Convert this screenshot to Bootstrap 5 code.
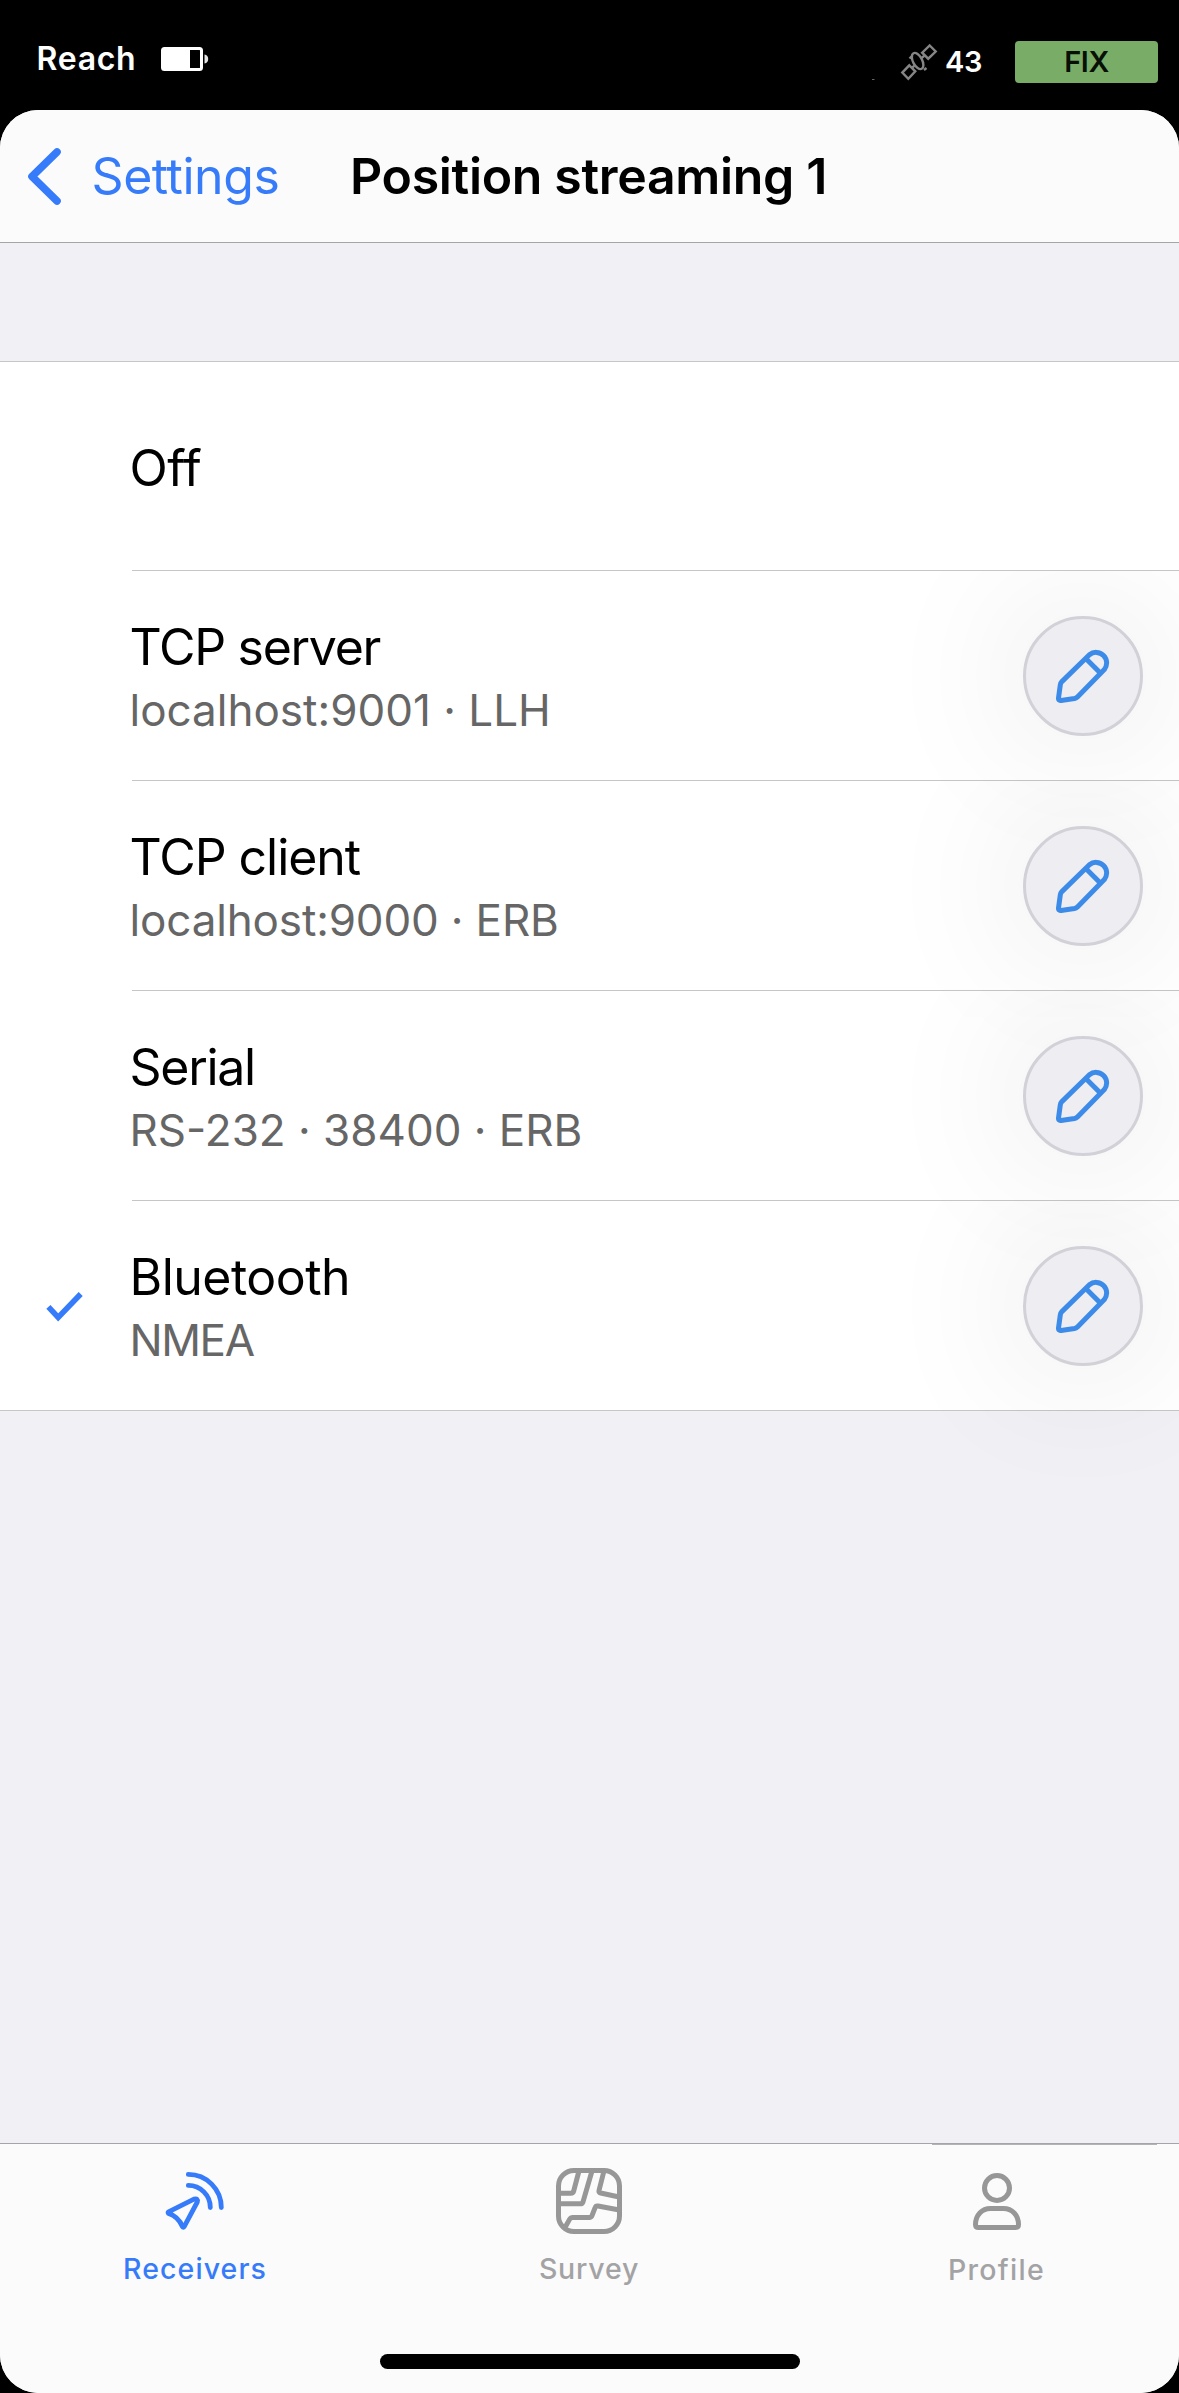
<!DOCTYPE html>
<html lang="en">
<head>
<meta charset="utf-8">
<meta name="viewport" content="width=device-width, initial-scale=1">
<title>Position streaming 1</title>
<link href="https://cdn.jsdelivr.net/npm/bootstrap@5.3.0/dist/css/bootstrap.min.css" rel="stylesheet">
<style>
  :root { --ios-blue: #367bf9; --ios-gray: #979797; }
  body { background: #000; color: #000; font-family: Inter, Roboto, "Liberation Sans", sans-serif; height: 2393px; overflow: hidden; }
  svg { display: block; flex: none; overflow: visible; }
  .status-bar { height: 110px; color: #fff; padding: 0 21px 0 36.5px; }
  .device-name { font-size: 32px; font-weight: 600; letter-spacing: .72px; line-height: 36px; width: 124.5px; margin-top: 40.5px; }
  .battery { margin-top: 47px; }
  .sat-icon { margin: 44px 8px 0 0; }
  .sat-count { font-size: 29px; font-weight: 600; letter-spacing: -.2px; line-height: 42px; width: 70px; margin-top: 40.5px; }
  .fix-state { width: 143px; height: 42px; margin-top: 41px; border-radius: 4px; background: #79ad67; color: #081005; font-size: 29px; font-weight: 600; letter-spacing: -.4px; line-height: 41px; }
  .sheet { height: 2283px; background: #f1f0f5; border-radius: 38px; overflow: hidden; }
  .nav-top { height: 133px; background: #fbfbfb; border-bottom: 1px solid #a5a5a7; }
  .nav-back { width: 350px; padding-left: 28px; color: var(--ios-blue); font-size: 50px; letter-spacing: -.45px; line-height: 60px; }
  .nav-back-text { padding-left: 30.5px; }
  .nav-name { font-size: 50px; font-weight: 600; letter-spacing: -.33px; line-height: 60px; margin: 0; }
  .options { margin-top: 118px; background: #fff; border-top: 1px solid #c6c6ca; border-bottom: 1px solid #c6c6c8; }
  .option { height: 210px; clip-path: inset(0 0 -200px 0); }
  .option:first-child, .option:last-child { height: 209px; }
  .option-check { width: 132px; padding: 91px 0 0 46px; flex: none; }
  .option-main { border-bottom: 1px solid #c6c6c8; }
  .option:last-child .option-main { border-bottom: 0; }
  .option-text { margin: 44px 0 0 -2.5px; }
  .option-name { font-size: 50px; line-height: 64px; }
  .option-note { font-size: 44px; line-height: 62px; color: #666; }
  .t-tight { letter-spacing: -1.3px; }
  .t-mid { letter-spacing: -1.05px; }
  .t-snug { letter-spacing: -.53px; }
  .n-tight { letter-spacing: -1.4px; }
  .n-snug { letter-spacing: -.15px; }
  .edit-btn { width: 120px; height: 120px; margin: 45px 36px 0 0; border: 3px solid #d2d1d8; background: #eeedf2; box-shadow: 0 0 150px rgba(0,0,0,.13); color: #3d8be8; }
  .tab-bar { height: 250px; background: #fbfbfb; border-top: 1px solid #a5a5a7; }
  .tab-row { height: 210px; }
  .tab-item { color: var(--ios-gray); }
  .tab-item svg { margin-top: 21px; }
  .tab-label { font-size: 28.5px; font-weight: 500; letter-spacing: 1.1px; line-height: 40px; margin-top: 11.5px; color: #a3a3a5; }
  .tab-a { width: 390px; color: var(--ios-blue); }
  .tab-a .tab-label { color: var(--ios-blue); }
  .tab-b { width: 398px; }
  .tab-b .tab-label { letter-spacing: .79px; }
  .tab-c { width: 391px; }
  .tab-c .tab-label { letter-spacing: 1.3px; margin-top: 12.5px; }
  .tab-c-line { width: 225px; height: 1px; margin-left: 144px; background: #b3b3b4; }
  .tab-c-body { padding-left: 26px; }
  .tab-c-body svg { margin-top: 20px; }
  .home-pill { width: 420px; height: 15px; border-radius: 8px; background: #000; }
</style>
<script src="https://cdn.jsdelivr.net/npm/bootstrap@5.3.0/dist/js/bootstrap.bundle.min.js"></script>
</head>
<body>
<svg width="0" height="0" class="position-absolute" aria-hidden="true">
  <symbol id="pencil" viewBox="0 0 54 54">
    <g fill="none" stroke="currentColor" stroke-width="5" stroke-linejoin="round">
      <path d="M5.6 32.9 33.4 5.7a10.6 10.6 0 0 1 14.9 14.9L21.2 48.2q-1.1 1-2.7 1.3L5 51.5q-2.7.2-2.5-2.4l1.8-13.3q.3-1.8 1.3-2.9Z"/>
      <path d="M29.8 9.500 44.1 23.800"/>
    </g>
  </symbol>
</svg>

<div class="status-bar d-flex align-items-start">
  <div class="device-name">Reach</div>
  <svg class="battery" width="47" height="24" viewBox="0 0 47 24">
    <rect x="1.500" y="1.500" width="39" height="21" rx="2" fill="none" stroke="#fff" stroke-width="3"/>
    <path d="M1.500 1.500H29v21H1.500Z" fill="#fff"/>
    <path d="M43.500 7.500q3.700.6 3.700 4.500t-3.700 4.500Z" fill="#e4e4e4"/>
  </svg>
  <svg class="sat-icon ms-auto" width="36" height="36" viewBox="0 0 36 36" fill="none" stroke="#858585" stroke-width="2.400">
    <path d="m28.700 1.500 6 6-7.500 7.200-6-6ZM8.300 21.300l6 6-7 7.500-6-6.200Z"/>
    <ellipse cx="16.600" cy="17" rx="8.800" ry="4.600" transform="rotate(62 16.600 17)"/>
    <path d="m20.500 14 3.500-2.700M10.700 24l3-2.700M23 26l2.500-2M8.500 14.500l3-3"/>
    <path d="M-29 35.500h2.500" stroke="#666" stroke-width="1"/>
  </svg>
  <div class="sat-count">43</div>
  <div class="fix-state text-center">FIX</div>
</div>

<div class="sheet d-flex flex-column">
  <header class="nav-top d-flex align-items-center">
    <a class="nav-back d-flex align-items-center text-decoration-none" href="#">
      <svg width="33" height="57" viewBox="0 0 33 57" fill="none" stroke="currentColor" stroke-width="7.600" stroke-linecap="round" stroke-linejoin="round"><path d="M29 4 4 28.500 29 53"/></svg>
      <span class="nav-back-text">Settings</span>
    </a>
    <h1 class="nav-name">Position streaming 1</h1>
  </header>

  <main class="flex-grow-1">
    <div class="options">
      <div class="option d-flex">
        <div class="option-check"></div>
        <div class="option-main flex-grow-1 d-flex align-items-center">
          <div class="option-text mt-0 pt-1"><div class="option-name t-snug">Off</div></div>
        </div>
      </div>
      <div class="option d-flex">
        <div class="option-check"></div>
        <div class="option-main flex-grow-1 d-flex align-items-start justify-content-between">
          <div class="option-text"><div class="option-name t-tight">TCP server</div><div class="option-note">localhost:9001 · LLH</div></div>
          <button class="edit-btn rounded-circle p-0 d-flex align-items-center justify-content-center" aria-label="Edit"><svg width="54" height="54"><use href="#pencil"/></svg></button>
        </div>
      </div>
      <div class="option d-flex">
        <div class="option-check"></div>
        <div class="option-main flex-grow-1 d-flex align-items-start justify-content-between">
          <div class="option-text"><div class="option-name t-mid">TCP client</div><div class="option-note n-snug">localhost:9000 · ERB</div></div>
          <button class="edit-btn rounded-circle p-0 d-flex align-items-center justify-content-center" aria-label="Edit"><svg width="54" height="54"><use href="#pencil"/></svg></button>
        </div>
      </div>
      <div class="option d-flex">
        <div class="option-check"></div>
        <div class="option-main flex-grow-1 d-flex align-items-start justify-content-between">
          <div class="option-text"><div class="option-name t-tight">Serial</div><div class="option-note">RS-232 · 38400 · ERB</div></div>
          <button class="edit-btn rounded-circle p-0 d-flex align-items-center justify-content-center" aria-label="Edit"><svg width="54" height="54"><use href="#pencil"/></svg></button>
        </div>
      </div>
      <div class="option d-flex">
        <div class="option-check"><svg width="37" height="30" viewBox="0 0 37 30" fill="none" stroke="#367bf9" stroke-width="5.600"><path d="m2.400 14.800 9.800 10.700L34.700 2"/></svg></div>
        <div class="option-main flex-grow-1 d-flex align-items-start justify-content-between">
          <div class="option-text"><div class="option-name t-snug">Bluetooth</div><div class="option-note n-tight">NMEA</div></div>
          <button class="edit-btn rounded-circle p-0 d-flex align-items-center justify-content-center" aria-label="Edit"><svg width="54" height="54"><use href="#pencil"/></svg></button>
        </div>
      </div>
    </div>
  </main>

  <footer class="tab-bar">
    <nav class="tab-row d-flex">
      <div class="tab-item tab-a d-flex flex-column align-items-center">
        <svg width="72" height="72" viewBox="0 0 72 72" fill="none" stroke="currentColor" stroke-width="4.800" stroke-linecap="round" stroke-linejoin="round">
          <path d="M29.300 9.400a33 33 0 0 1 33 33.100M29.300 20.400a22 22 0 0 1 22 22.100"/>
          <path d="M9.500 46.800 35 34.100q4.300-1.200 3.300 2.900L25.200 61.600q-.9 1.300-1.800 0Q19.500 51.700 9.500 48.400q-.9-.8 0-1.600Z"/>
        </svg>
        <div class="tab-label">Receivers</div>
      </div>
      <div class="tab-item tab-b d-flex flex-column align-items-center">
        <svg width="72" height="72" viewBox="0 0 72 72" fill="none" stroke="currentColor" stroke-width="5" stroke-linejoin="round">
          <rect x="5.500" y="5.500" width="61" height="61" rx="15.500"/>
          <path d="M25.700 7 20.600 26.300q-.6 2-2.600 2H7M38.700 7 30 36.900q-.6 1.900-2.600 1.900H7M50.700 7 46 25.500q-.5 2 1.600 2.500L65 31.700M12 62.500l4.700-8.400q1-1.700 3-1.700h16.600q2 0 2.700-1.800l3.100-8q.7-2 2.900-1.600L65 44.700"/>
        </svg>
        <div class="tab-label">Survey</div>
      </div>
      <div class="tab-item tab-c">
        <div class="tab-c-line"></div>
        <div class="tab-c-body d-flex flex-column align-items-center">
          <svg width="72" height="72" viewBox="0 0 72 72" fill="none" stroke="currentColor" stroke-width="5">
            <circle cx="36" cy="23" r="12.500"/>
            <path d="M14.500 59.500c0-9.500 6.500-16 15-16h13c8.500 0 15 6.500 15 16q0 3-3 3h-37q-3 0-3-3Z"/>
          </svg>
          <div class="tab-label">Profile</div>
        </div>
      </div>
    </nav>
    <div class="home-pill mx-auto"></div>
  </footer>
</div>
</body>
</html>
